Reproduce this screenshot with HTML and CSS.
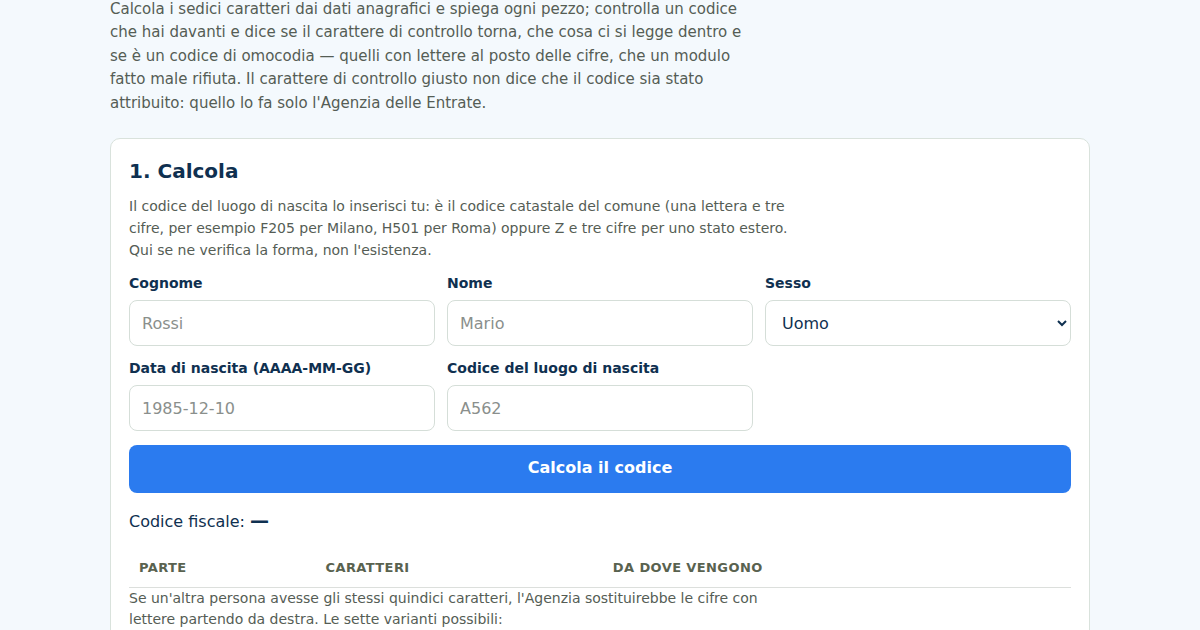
FILE: index.html
```html
<!DOCTYPE html>
<html lang="it">
<head>
<meta charset="UTF-8" />
<meta name="viewport" content="width=device-width, initial-scale=1" />
<title>Codice fiscale - Calcola e verifica</title>
<link rel="stylesheet" href="styles.css">
</head>
<body>
  <main class="pagina">

    <p class="intro">Calcola i sedici caratteri dai dati anagrafici e spiega ogni pezzo; controlla un codice che hai davanti e dice se il carattere di controllo torna, che cosa ci si legge dentro e se è un codice di omocodia — quelli con lettere al posto delle cifre, che un modulo fatto male rifiuta. Il carattere di controllo giusto non dice che il codice sia stato attribuito: quello lo fa solo l'Agenzia delle Entrate.</p>

    <!-- 1. Calcola -->
    <section class="scheda">
      <h2>1. Calcola</h2>
      <p class="nota">Il codice del luogo di nascita lo inserisci tu: è il codice catastale del comune (una lettera e tre cifre, per esempio F205 per Milano, H501 per Roma) oppure Z e tre cifre per uno stato estero. Qui se ne verifica la forma, non l'esistenza.</p>

      <div class="griglia">
        <label class="campo">
          <span>Cognome</span>
          <input type="text" placeholder="Rossi" />
        </label>
        <label class="campo">
          <span>Nome</span>
          <input type="text" placeholder="Mario" />
        </label>
        <label class="campo">
          <span>Sesso</span>
          <select>
            <option>Uomo</option>
            <option>Donna</option>
          </select>
        </label>
        <label class="campo">
          <span>Data di nascita (AAAA-MM-GG)</span>
          <input type="text" placeholder="1985-12-10" />
        </label>
        <label class="campo">
          <span>Codice del luogo di nascita</span>
          <input type="text" placeholder="A562" />
        </label>
      </div>

      <button class="bottone" type="button">Calcola il codice</button>

      <p class="risultato">Codice fiscale: <strong>—</strong></p>

      <table class="parti">
        <thead>
          <tr>
            <th class="col-parte">Parte</th>
            <th class="col-caratteri">Caratteri</th>
            <th>Da dove vengono</th>
          </tr>
        </thead>
        <tbody></tbody>
      </table>

      <p class="nota">Se un'altra persona avesse gli stessi quindici caratteri, l'Agenzia sostituirebbe le cifre con lettere partendo da destra. Le sette varianti possibili:</p>
    </section>

  </main>
</body>
</html>
```

FILE: styles.css
```css
body {
  margin: 0;
  background: #f4f9fd;
  color: #555d55;
  font-family: "DejaVu Sans", Verdana, sans-serif;
}
.pagina {
  width: 980px;
  margin: 0 auto;
}
.intro {
  margin: -2px 0 23px;
  max-width: 640px;
  font-size: 15px;
  line-height: 23.4px;
}
.scheda {
  background: #fff;
  border: 1px solid #d9e2dc;
  border-radius: 10px;
  padding: 20px 18px;
}
h2 {
  margin: 0 0 12px;
  font-size: 20px;
  line-height: 24px;
  color: #0f3050;
}
.nota {
  margin: 0 0 12px;
  max-width: 665px;
  font-size: 14px;
  line-height: 22px;
}
.griglia {
  display: grid;
  grid-template-columns: repeat(3, 1fr);
  gap: 12px;
}
.campo {
  display: flex;
  flex-direction: column;
  gap: 7px;
}
.campo span {
  font-size: 14px;
  line-height: 20px;
  font-weight: bold;
  color: #0f3050;
}
.campo input, .campo select {
  box-sizing: border-box;
  height: 46px;
  padding: 0 12px;
  border: 1px solid #d5ded8;
  border-radius: 8px;
  background: #fff;
  font-family: inherit;
  font-size: 16px;
  color: #0f3050;
}
.campo input::placeholder {
  color: #8a8f8c;
}
.bottone {
  display: block;
  width: 100%;
  height: 48px;
  margin-top: 14px;
  padding: 0 0 3px;
  border: 0;
  border-radius: 8px;
  background: #2b7bef;
  color: #fff;
  font-family: inherit;
  font-size: 16px;
  font-weight: bold;
  cursor: pointer;
}
.risultato {
  margin: 16px 0 0;
  font-size: 16px;
  line-height: 22px;
  color: #0f3050;
}
.risultato strong {
  font-size: 19px;
  line-height: 22px;
}
.parti {
  width: 100%;
  margin-top: 17px;
  border-collapse: collapse;
}
.parti th {
  padding: 8px 10px 9px;
  border-bottom: 1px solid #dcdfdc;
  text-align: left;
  font-size: 13px;
  line-height: 20px;
  letter-spacing: 0.4px;
  text-transform: uppercase;
  color: #59624f;
}
.col-parte {
  width: 19.8%;
}
.col-caratteri {
  width: 30.5%;
}
.parti + .nota {
  margin-top: 0;
  line-height: 21px;
}
```
